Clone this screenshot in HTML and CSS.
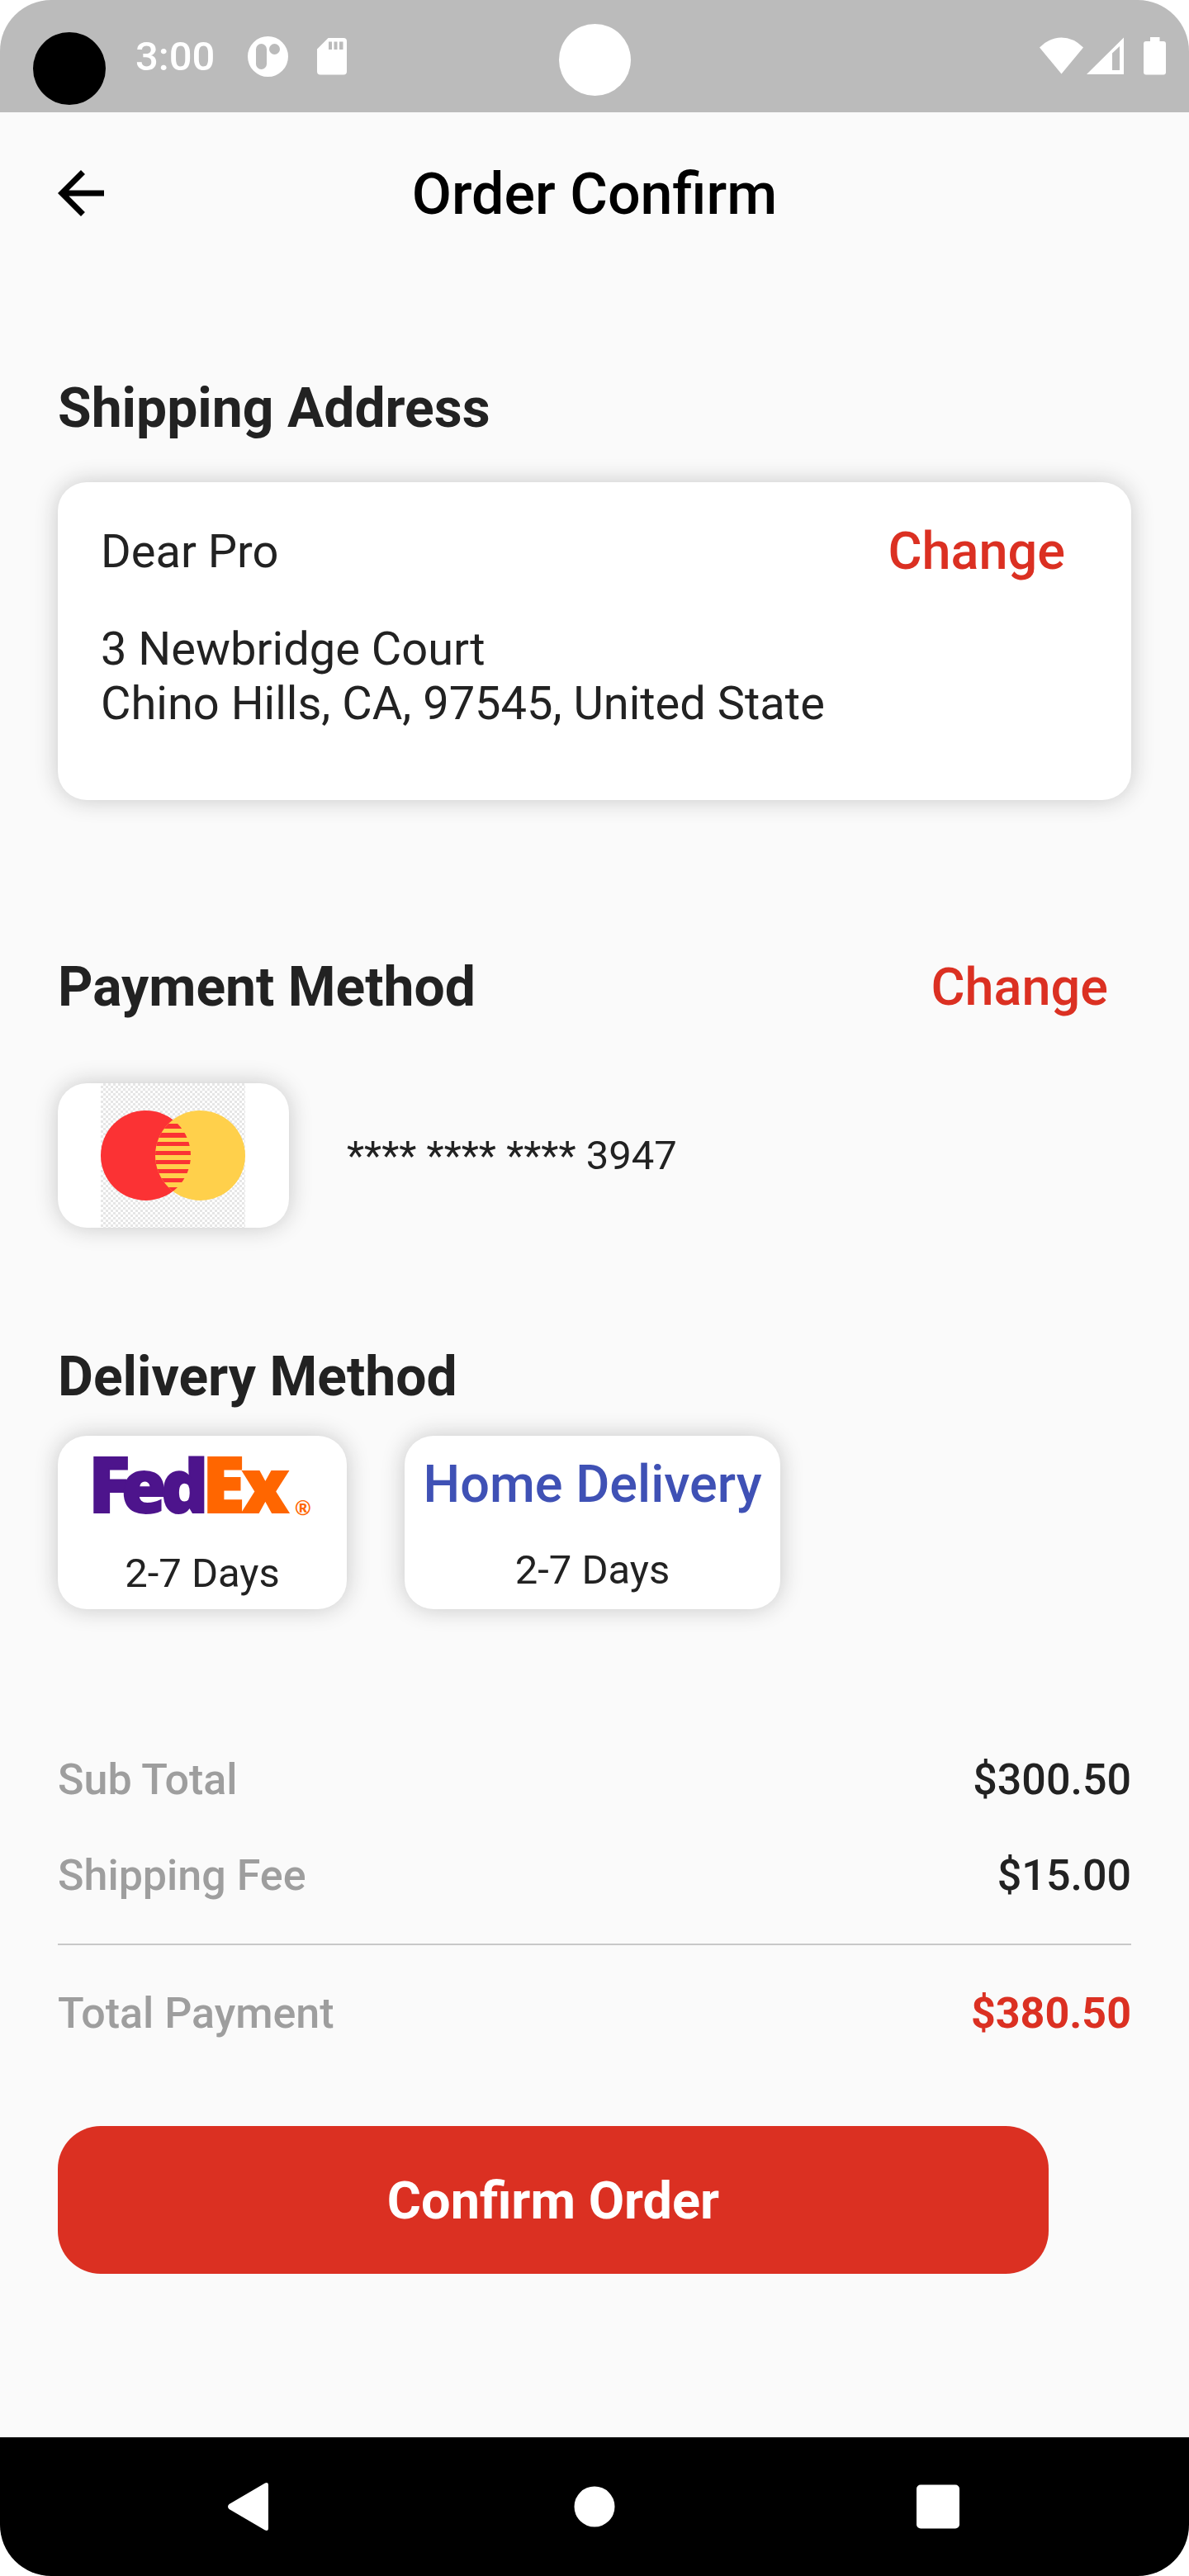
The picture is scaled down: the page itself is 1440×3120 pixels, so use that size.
FILE: index.html
```html
<!DOCTYPE html>
<html lang="en">
<head>
<meta charset="utf-8">
<meta name="viewport" content="width=device-width, initial-scale=1">
<title>Order Confirm</title>
<link rel="stylesheet" href="styles.css">
</head>
<body>
<div class="screen">
  <div class="status">
    <span class="camera"></span>
    <span class="lens"></span>
    <div class="status-group">
      <span class="time">3:00</span>
      <svg class="debug-icon" width="50" height="50" viewBox="0 0 50 50" aria-hidden="true">
        <path fill="#fff" fill-rule="evenodd" d="M24.500 0a24.500 24.500 0 1 0 0 49a24.500 24.500 0 1 0 0-49zM16.500 9a6.500 6.500 0 0 1 6.500 6.500v18a6.500 6.500 0 0 1-13 0v-18a6.500 6.500 0 0 1 6.500-6.500zM32.500 9a6.500 6.500 0 1 1 0 13a6.500 6.500 0 1 1 0-13z"/>
      </svg>
      <svg width="36" height="50" viewBox="0 0 36 50" aria-hidden="true">
        <path fill="#fff" fill-rule="evenodd" d="M13.500 2H32a4 4 0 0 1 4 4v36.500a4 4 0 0 1-4 4H4a4 4 0 0 1-4-4V15.500zM14 6.500v9.500h4V6.500zM20.500 6.500v9.500h4V6.500zM27 6.500v9.500h4.500V6.500z"/>
      </svg>
    </div>
    <div class="status-group">
      <svg width="102" height="50" viewBox="0 0 102 50" aria-hidden="true">
        <path fill="#fff" d="M0 13.500Q12 1.500 26.500 1.500T53 13.500L26.500 45.500z"/>
        <path fill="#fff" fill-rule="evenodd" d="M57 46L102 1.500V46zM88 20.500V41h9V12z"/>
      </svg>
      <svg class="battery-icon" width="27" height="50" viewBox="0 0 27 50" aria-hidden="true">
        <path fill="#fff" d="M8 1h11.500v5H24a3 3 0 0 1 3 3v34.500a3 3 0 0 1-3 3H3a3 3 0 0 1-3-3V9a3 3 0 0 1 3-3h5z"/>
      </svg>
    </div>
  </div>

  <header class="appbar">
    <button class="back" type="button" aria-label="Back">
      <svg width="56" height="56" viewBox="4 4 16 16" aria-hidden="true"><path d="M20 11H7.830l5.590-5.590L12 4l-8 8 8 8 1.410-1.410L7.830 13H20v-2z"/></svg>
    </button>
    <h1 class="title">Order Confirm</h1>
  </header>

  <main class="content">
    <section class="shipping">
      <h2 class="heading">Shipping Address</h2>
      <div class="card address">
        <div class="row">
          <p class="body-text">Dear Pro</p>
          <button class="change" type="button">Change</button>
        </div>
        <p class="body-text">3 Newbridge Court<br>Chino Hills, CA, 97545, United State</p>
      </div>
    </section>

    <section class="payment">
      <div class="row">
        <h2 class="heading">Payment Method</h2>
        <button class="change" type="button">Change</button>
      </div>
      <div class="pay-row">
        <div class="card pay-card">
          <svg width="175" height="175" viewBox="0 0 175 175" role="img" aria-label="Mastercard">
            <defs>
              <pattern id="checks" width="6" height="6" patternUnits="userSpaceOnUse">
                <rect width="6" height="6" fill="#fff"/>
                <path fill="#e6e6e6" d="M3 0h3v3H3zM0 3h3v3H0z"/>
              </pattern>
              <clipPath id="yellow-disc"><circle cx="120.500" cy="87.500" r="54.500"/></clipPath>
              <clipPath id="red-disc"><circle cx="54.500" cy="87.500" r="54.500"/></clipPath>
            </defs>
            <rect width="175" height="175" fill="url(#checks)"/>
            <circle cx="54.500" cy="87.500" r="54.500" fill="#fb3234"/>
            <circle cx="120.500" cy="87.500" r="54.500" fill="#ffd04b"/>
            <g clip-path="url(#yellow-disc)">
              <path clip-path="url(#red-disc)" fill="#fb3234" d="M60 49h60v6H60zM60 60h60v6H60zM60 71h60v5H60zM60 82h60v5H60zM60 93h60v5H60zM60 104h60v5H60zM60 115h60v5H60zM60 126h60v20H60z"/>
            </g>
          </svg>
        </div>
        <p class="small-text">**** **** **** 3947</p>
      </div>
    </section>

    <section class="delivery">
      <h2 class="heading">Delivery Method</h2>
      <div class="options">
        <div class="card option option-fedex">
          <svg class="fedex" width="350" height="86" viewBox="0 0 350 86" role="img" aria-label="FedEx">
            <g class="fedex-word">
              <text fill="#4d148c" stroke="#4d148c" y="75"><tspan x="37" font-size="94">F</tspan><tspan x="77" font-size="88">e</tspan><tspan x="125" font-size="89">d</tspan></text>
              <text fill="#ff6600" stroke="#ff6600" y="75"><tspan x="175" font-size="94">E</tspan><tspan x="223" font-size="90">x</tspan></text>
            </g>
            <text class="fedex-mark" x="287" y="78" fill="#ff6600">®</text>
          </svg>
          <p class="small-text">2-7 Days</p>
        </div>
        <div class="card option option-home">
          <p class="home">Home Delivery</p>
          <p class="small-text">2-7 Days</p>
        </div>
      </div>
    </section>

    <dl class="totals">
      <div class="row"><dt>Sub Total</dt><dd>$300.50</dd></div>
      <div class="row"><dt>Shipping Fee</dt><dd>$15.00</dd></div>
      <div class="row grand"><dt>Total Payment</dt><dd>$380.50</dd></div>
    </dl>

    <button class="confirm" type="button">Confirm Order</button>
  </main>

  <nav class="navbar" aria-label="System">
    <button type="button" aria-label="Back"><svg width="60" height="60" viewBox="0 0 60 60"><path fill="#fff" d="M7.500 27L51 1.500Q55 0 55 4v52q0 4-4 2.500L7.500 33Q4.500 30 7.500 27z"/></svg></button>
    <button type="button" aria-label="Home"><svg width="60" height="60" viewBox="0 0 60 60"><circle cx="30" cy="30" r="24.500" fill="#fff"/></svg></button>
    <button type="button" aria-label="Recent apps"><svg width="60" height="60" viewBox="0 0 60 60"><rect x="0" y="3.500" width="52" height="53" rx="5" fill="#fff"/></svg></button>
  </nav>
</div>
</body>
</html>
```
FILE: styles.css
```css
* { box-sizing: border-box; }

body {
  margin: 0;
  background: #fff;
  color: #222;
  font-family: Roboto, "Liberation Sans", sans-serif;
}

h1, h2, p, dl, dd { margin: 0; }

button {
  border: 0;
  padding: 0;
  background: none;
  font-family: inherit;
  cursor: pointer;
}

svg { display: block; flex: none; }

.screen {
  display: flex;
  flex-direction: column;
  min-height: 100vh;
  border-radius: 62px;
  overflow: hidden;
  background: #fafafa;
}

/* Status bar */
.status {
  position: relative;
  display: flex;
  justify-content: space-between;
  align-items: center;
  height: 136px;
  padding: 2px 28px 0 164px;
  background: #bbb;
}

.status-group { display: flex; align-items: center; }

.time {
  color: #fff;
  font-size: 49px;
  font-weight: 500;
  line-height: 58px;
}

.debug-icon { margin: 0 34px 0 40px; }
.battery-icon { margin-left: 24px; }

.camera, .lens { position: absolute; border-radius: 50%; }
.camera { left: 40px; top: 39px; width: 88px; height: 88px; background: #000; }
.lens { left: 50%; top: 29px; width: 87px; height: 87px; margin-left: -43px; background: #fff; }

/* App bar */
.appbar {
  display: grid;
  grid-template-columns: 56px 1fr 56px;
  align-items: center;
  height: 196px;
  padding: 0 70px;
}

.title {
  padding-top: 2px;
  color: #000;
  font-size: 70px;
  font-weight: 500;
  line-height: 82px;
  text-align: center;
}

/* Page */
.content {
  flex: 1;
  padding: 124px 70px 198px;
}

.row {
  display: flex;
  justify-content: space-between;
  align-items: center;
}

.heading {
  font-size: 66px;
  font-weight: 700;
  line-height: 78px;
}

.body-text { font-size: 56px; line-height: 66px; }
.small-text { font-size: 49px; line-height: 58px; }

.card {
  border-radius: 35px;
  background: #fff;
  box-shadow: 0 0 28px #c6c6c6;
}

.change {
  margin-right: 28px;
  color: #db3022;
  font-size: 63px;
  font-weight: 500;
  line-height: 66px;
}

.address {
  display: flex;
  flex-direction: column;
  gap: 52px;
  margin-top: 50px;
  padding: 51px 52px 84px;
}

.payment { margin-top: 188px; }

.pay-row {
  display: flex;
  align-items: center;
  gap: 70px;
  margin-top: 77px;
}

.pay-card { padding: 0 53px 0 52px; }

.delivery { margin-top: 142px; }

.options {
  display: flex;
  gap: 70px;
  margin-top: 32px;
}

.option {
  display: flex;
  flex-direction: column;
  align-items: center;
  height: 210px;
}

.option-fedex { width: 350px; padding-top: 18px; gap: 34px; }
.option-home { width: 455px; padding-top: 22px; gap: 38px; }

.fedex { overflow: visible; }

.fedex-word {
  font-family: "Open Sans", sans-serif;
  font-weight: 800;
  stroke-width: 2px;
}

.fedex-mark { font: 700 24px Lato, sans-serif; }

.home {
  color: #3f51b5;
  font-size: 63px;
  font-weight: 500;
  line-height: 74px;
  white-space: nowrap;
}

.totals {
  margin-top: 176px;
  font-size: 52px;
  font-weight: 500;
  line-height: 62px;
}

.totals .row + .row { margin-top: 54px; }
.totals dt { color: #9e9e9e; }

.totals .grand {
  padding-top: 52px;
  border-top: 2px solid #c8c8c8;
}

.totals .row + .grand { margin-top: 51px; }

.grand dd { color: #db3022; font-weight: 700; }

.confirm {
  display: block;
  width: calc(100% - 100px);
  height: 179px;
  margin-top: 105px;
  padding-top: 2px;
  border-radius: 52px;
  background: #db3022;
  color: #fff;
  font-size: 63px;
  font-weight: 700;
}

/* System navigation */
.navbar {
  display: grid;
  grid-template-columns: repeat(3, 60px);
  justify-content: space-between;
  align-items: center;
  height: 168px;
  padding: 0 270px;
  background: #000;
}
```
